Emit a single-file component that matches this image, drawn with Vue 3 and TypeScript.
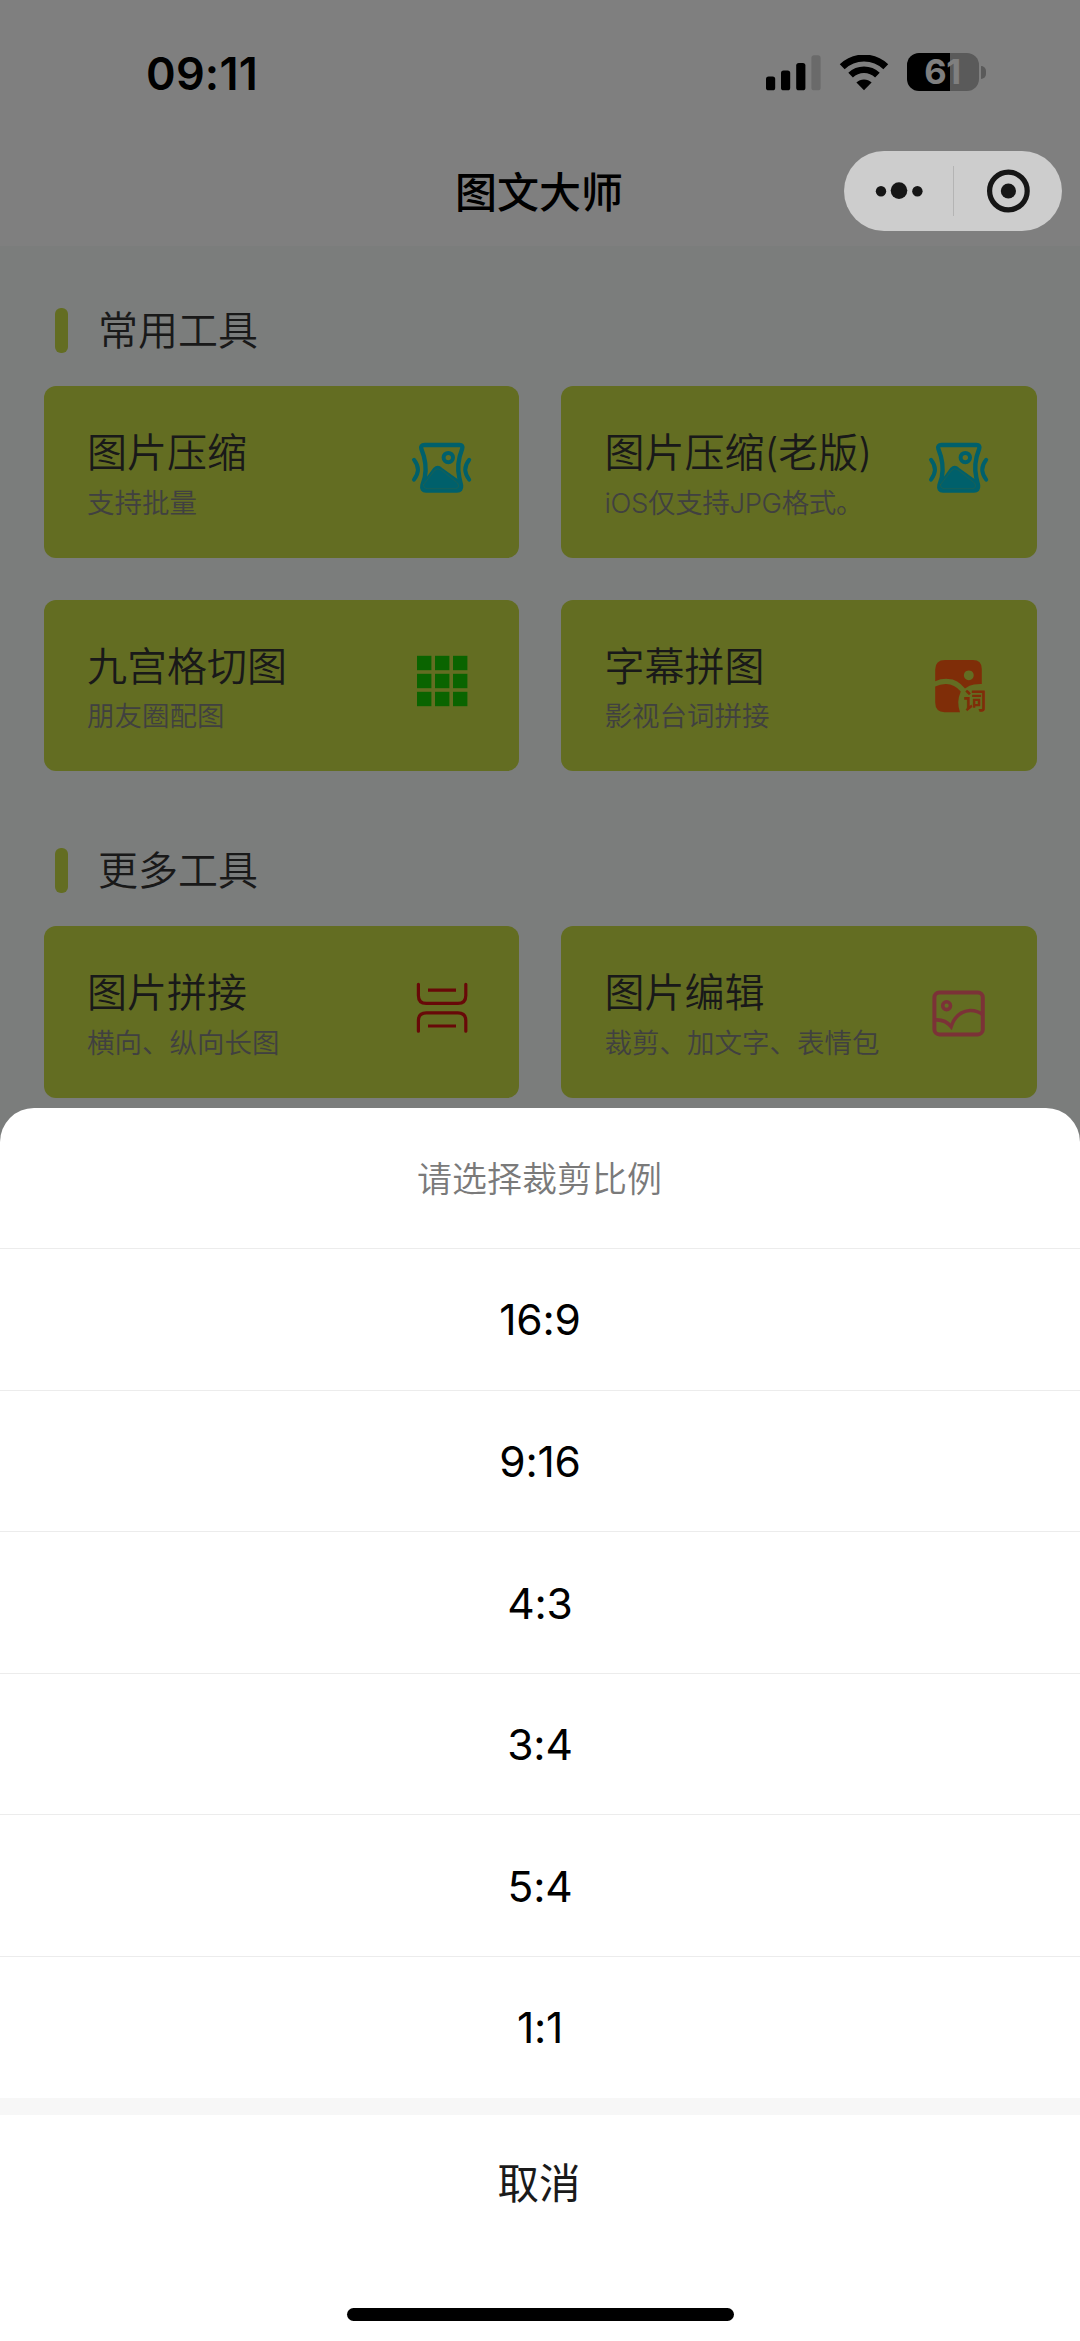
<script setup lang="ts">
type IconName = 'compress' | 'grid' | 'subtitle' | 'stitch' | 'edit'

interface Tool {
  name: string
  desc: string
  icon: IconName
}

interface Section {
  title: string
  tools: Tool[]
}

const sections: Section[] = [
  {
    title: '常用工具',
    tools: [
      { name: '图片压缩', desc: '支持批量', icon: 'compress' },
      { name: '图片压缩(老版)', desc: 'iOS仅支持JPG格式。', icon: 'compress' },
      { name: '九宫格切图', desc: '朋友圈配图', icon: 'grid' },
      { name: '字幕拼图', desc: '影视台词拼接', icon: 'subtitle' },
    ],
  },
  {
    title: '更多工具',
    tools: [
      { name: '图片拼接', desc: '横向、纵向长图', icon: 'stitch' },
      { name: '图片编辑', desc: '裁剪、加文字、表情包', icon: 'edit' },
    ],
  },
]

const ratios: string[] = ['16:9', '9:16', '4:3', '3:4', '5:4', '1:1']
const cells: number[] = [5, 23, 41]

const hasLatin = (text: string): boolean => /[A-Za-z]/.test(text)
</script>

<template>
  <div class="screen">
    <header class="top">
      <div class="status">
        <span class="time">09:11</span>
        <div class="indicators">
          <svg class="signal" width="56" height="36" viewBox="0 0 56 36">
            <rect x="0" y="21.5" width="9.2" height="13.8" rx="2.6" />
            <rect x="15" y="15.5" width="9.2" height="19.8" rx="2.6" />
            <rect x="30.2" y="8" width="9.2" height="27.3" rx="2.6" />
            <rect x="45.4" y="0.3" width="9.2" height="35" rx="2.6" fill="#d4d4d4" />
          </svg>
          <svg class="wifi" width="50" height="36" viewBox="0 0 50 36">
            <path d="M3.2 11.8 A31.5 31.5 0 0 1 46.8 11.8" fill="none" stroke="#000" stroke-width="7" />
            <path d="M11.6 20.2 A19.2 19.2 0 0 1 38.4 20.2" fill="none" stroke="#000" stroke-width="6.6" />
            <path d="M25 35.2 L17.4 27.6 A10.8 10.8 0 0 1 32.6 27.6 Z" />
          </svg>
          <div class="battery">
            <span class="battery-body"><span class="battery-text">61</span></span>
            <span class="battery-nub"></span>
          </div>
        </div>
      </div>
      <h1 class="title">图文大师</h1>
    </header>

    <main class="content">
      <section v-for="section in sections" :key="section.title" class="section">
        <div class="section-head">
          <span class="marker"></span>
          <h2>{{ section.title }}</h2>
        </div>
        <div class="cards">
          <article v-for="tool in section.tools" :key="tool.name" class="card">
            <div class="labels">
              <span class="name">{{ tool.name }}</span>
              <span class="desc" :class="{ latin: hasLatin(tool.desc) }">{{ tool.desc }}</span>
            </div>
            <svg class="icon" width="60" height="60" viewBox="0 0 60 60">
              <g v-if="tool.icon === 'compress'" fill="none" stroke="#00c0d6" stroke-width="4.4" stroke-linecap="round" stroke-linejoin="round">
                <path d="M12.5 7 H47.5 Q51.3 7 50.1 11 Q44.2 26 47.3 39.5 L49.1 47.5 Q49.6 52.6 45 52.6 H14 Q9.4 52.6 10.4 47.5 L12.8 39.5 Q15.5 26 9.4 11 Q8.3 7 12.5 7 Z" />
                <path d="M10.6 46 L21.8 30.5 Q25.7 26.7 29.8 30.5 L48.6 44 L48.8 48.5 Q48.6 52.4 45 52.4 H14 Q10 52.4 10.6 46 Z" fill="#00c0d6" stroke-width="1.4" />
                <path d="M11.6 46.5 L22.6 32.4 Q25.8 29.2 29.2 32 L45.6 45 Q48.2 50 43.5 50.7 H15 Q11 50 11.6 46.5 Z" stroke="#53bf8e" stroke-width="0.6" />
                <circle cx="36.3" cy="19.6" r="4.7" stroke-width="4" />
                <path d="M2 21.8 Q9.8 31.5 2 41.6" stroke-width="4" />
                <path d="M57.2 21.8 Q49.4 31.5 57.2 41.6" stroke-width="4" />
              </g>
              <g v-else-if="tool.icon === 'grid'" fill="#14c800">
                <template v-for="y in cells" :key="y">
                  <rect v-for="x in cells" :key="x" :x="x" :y="y - 0.2" width="14.4" height="14.4" />
                </template>
              </g>
              <g v-else-if="tool.icon === 'subtitle'" fill="#ff5a10">
                <path fill-rule="evenodd" d="M16 9 H44 Q52.8 9 52.8 18 V33 Q49 32.8 45 33.6 Q40.5 34.3 36 37.6 Q28.5 27.7 18.8 27.9 Q12 27.6 6.2 30.2 V18.5 Q6.2 9 16 9 Z M39.8 19.4 a4.9 4.9 0 1 0 0.01 0 Z" />
                <path d="M6.2 35.6 Q11.5 32.8 17.2 33 Q25.5 33 31.8 40.6 Q27.2 51 31 61.2 H15.5 Q6.2 60.8 6.2 51.5 Z" />
                <text x="34.6" y="57.6" class="glyph">词</text>
              </g>
              <g v-else-if="tool.icon === 'stitch'" fill="none" stroke="#d01210" stroke-width="3.2" stroke-linecap="round">
                <path d="M6.4 6.3 V17.5 Q6.4 25.4 14.3 25.4 H45.9 Q53.8 25.4 53.8 17.5 V6.3" />
                <path d="M6.4 53.2 V42.6 Q6.4 34.8 14.3 34.8 H45.9 Q53.8 34.8 53.8 42.6 V53.2" />
                <path d="M16 12.1 H44 M16 48 H44" stroke-linecap="butt" />
              </g>
              <g v-else fill="none" stroke="#f7646e" stroke-width="4">
                <rect x="5.4" y="14.4" width="48.4" height="42" rx="5" />
                <circle cx="17.6" cy="27.7" r="3.9" stroke-width="3.6" />
                <path d="M5.4 42 Q16 41 22.1 48.6 Q27 33.6 41 32.5 Q48.5 32.3 54 36.8" stroke-width="3.6" />
              </g>
            </svg>
          </article>
        </div>
      </section>
    </main>

    <div class="mask"></div>

    <div class="capsule">
      <svg width="218" height="81" viewBox="0 0 218 81">
        <g fill="#161616">
          <circle cx="37" cy="40.2" r="5.2" />
          <circle cx="55" cy="39.6" r="8.3" />
          <circle cx="73.4" cy="40.2" r="5.2" />
          <circle cx="164.4" cy="40" r="7.6" />
        </g>
        <path d="M109.5 15 V65" stroke="#b4b4b4" stroke-width="1" />
        <circle cx="164.4" cy="40" r="18.8" fill="none" stroke="#161616" stroke-width="5.2" />
      </svg>
    </div>

    <div class="sheet">
      <p class="row prompt">请选择裁剪比例</p>
      <button v-for="ratio in ratios" :key="ratio" class="row option" type="button">{{ ratio }}</button>
      <div class="band"></div>
      <button class="cancel" type="button">取消</button>
      <div class="home"></div>
    </div>
  </div>
</template>

<style>
body {
  margin: 0;
}
</style>

<style scoped>
.screen {
  position: relative;
  width: 1080px;
  height: 2341px;
  overflow: hidden;
  background: #f6faf9;
  font-family: Inter, "Noto Sans CJK SC", sans-serif;
}

.top {
  height: 246px;
  background: #fff;
}

.status {
  display: flex;
  justify-content: space-between;
  height: 138px;
  padding: 0 94.5px 0 146px;
}

.time {
  margin-top: 47px;
  font-size: 45px;
  font-weight: 600;
  line-height: 54px;
  letter-spacing: 0.2px;
}

.indicators {
  display: flex;
  align-items: flex-start;
  padding-top: 53px;
}

.signal {
  margin: 2px 17px 0 0;
}

.wifi {
  margin: 2px 18px 0 0;
}

.battery {
  display: flex;
  align-items: center;
  gap: 2px;
}

.battery-body {
  display: flex;
  align-items: center;
  justify-content: center;
  width: 72px;
  height: 38px;
  border-radius: 12px;
  background: linear-gradient(90deg, #000 0 43.5px, #b4b4b4 43.5px);
}

.battery-text {
  color: #fff;
  font-size: 34.5px;
  font-weight: 700;
  line-height: 38px;
  letter-spacing: -0.4px;
}

.battery-nub {
  width: 5px;
  height: 13px;
  border-radius: 0 5px 5px 0;
  background: #b4b4b4;
}

.title {
  margin: 24px 2px 0 0;
  text-align: center;
  font-size: 42px;
  font-weight: 500;
  line-height: 62px;
}

.content {
  padding: 0 43px 0 44px;
}

.section {
  height: 540px;
  padding-top: 62px;
  box-sizing: border-box;
}

.section-head {
  display: flex;
  align-items: center;
  gap: 30px;
  height: 45px;
  padding-left: 11px;
}

.marker {
  width: 13px;
  height: 45px;
  border-radius: 6px;
  background: #c6da44;
}

h2 {
  margin: 0;
  color: #333;
  font-size: 40px;
  font-weight: 350;
  line-height: 45px;
}

.cards {
  display: grid;
  grid-template-columns: 475.3px 475.3px;
  grid-auto-rows: 171.4px;
  gap: 42px 42.1px;
  margin-top: 33.3px;
}

.card {
  display: flex;
  justify-content: space-between;
  box-sizing: border-box;
  padding: 0 47.3px 0 43px;
  border-radius: 12px;
  background: #c6da44;
}

.labels {
  display: flex;
  flex-direction: column;
  padding-top: 40px;
}

.name {
  color: #333;
  font-size: 40px;
  font-weight: 350;
  line-height: 54px;
  white-space: nowrap;
}

.desc {
  margin-top: 3.5px;
  color: #808080;
  font-size: 27.5px;
  font-weight: 350;
  line-height: 38px;
  white-space: nowrap;
}

.desc.latin {
  letter-spacing: -0.35px;
}

.icon {
  flex: none;
  margin-top: 51.3px;
  overflow: visible;
}

.glyph {
  font-size: 23px;
  font-weight: 700;
}

.mask {
  position: absolute;
  inset: 0;
  background: rgba(0, 0, 0, 0.5);
}

.capsule {
  position: absolute;
  top: 150.5px;
  left: 844px;
  width: 218px;
  height: 80.5px;
  border-radius: 41px;
  background: #cdcdcd;
}

.capsule svg {
  display: block;
}

.sheet {
  position: absolute;
  right: 0;
  bottom: 0;
  left: 0;
  height: 1233.5px;
  border-radius: 34px 34px 0 0;
  background: #fff;
}

.row,
.cancel {
  display: flex;
  align-items: center;
  justify-content: center;
  box-sizing: border-box;
  width: 100%;
  margin: 0;
  padding: 0;
  border: 0;
  background: none;
  font-family: inherit;
}

.row {
  height: 141.6px;
}

.row.prompt {
  height: 140.6px;
  padding: 0 1px 2px 0;
  color: #7a7a7a;
  font-size: 35px;
  font-weight: 350;
}

.option {
  padding-top: 1px;
  border-top: 1px solid #ececec;
  color: #000;
  font-size: 42.5px;
  letter-spacing: -0.2px;
}

.band {
  height: 17px;
  background: #f7f7f7;
}

.cancel {
  height: 137px;
  padding: 0 2px 5px 0;
  color: #1a1a1a;
  font-size: 41.5px;
}

.home {
  width: 387px;
  height: 13px;
  margin: 56px auto 0;
  border-radius: 7px;
  background: #000;
}
</style>
